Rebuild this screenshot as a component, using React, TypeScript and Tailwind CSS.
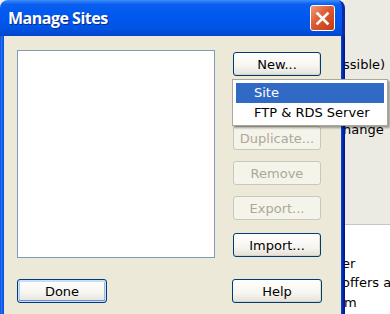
import React from "react";

const font = { fontFamily: '"DejaVu Sans", Verdana, sans-serif' };

function Btn({
  label,
  disabled,
  def,
  w = "w-[88px]",
  className = "",
}: {
  label: string;
  disabled?: boolean;
  def?: boolean;
  w?: string;
  className?: string;
}) {
  const base = `${w} h-[24px] rounded-[3px] border flex items-center justify-center text-[13px] leading-none ${className}`;
  if (disabled) {
    return (
      <div className={`${base} border-[#c9c7ba] bg-[#f5f4ea] text-[#aca899]`}>{label}</div>
    );
  }
  return (
    <div
      className={`${base} border-[#003c74] text-black bg-[linear-gradient(to_bottom,#ffffff,#f6f5f0_60%,#e4e1d6)] ${
        def
          ? "shadow-[inset_0_0_0_1px_#cde0fb,inset_0_2px_0_#c6dcfc,inset_0_-2px_0_#6b8fe6,inset_2px_0_0_#b5ccf6,inset_-2px_0_0_#9ab6f0]"
          : "shadow-[inset_0_-1px_0_#d6d0c5,inset_-1px_0_0_#e2ded2]"
      }`}
    >
      {label}
    </div>
  );
}

export default function App() {
  return (
    <div
      className="relative w-[390px] h-[314px] overflow-hidden flex bg-[#f1f0ea]"
      style={font}
    >
      {/* Dialog */}
      <div className="relative z-10 w-[345px] h-[314px] shrink-0 flex flex-col">
        {/* Title bar */}
        <div className="h-[36px] shrink-0 rounded-t-[8px] flex items-center justify-between pl-[8px] pr-[7px] bg-[linear-gradient(to_bottom,#3d8ef7,#0a5ef0_12%,#0058ee_45%,#0055e6_75%,#0046cc)] border-r-[3px] border-r-[#0a2aa8]">
          <span
            className="text-white font-bold text-[16px] tracking-[-0.5px] [text-shadow:1px_1px_0_#0a2a8c]"
            style={{ fontFamily: '"Open Sans", "DejaVu Sans", sans-serif' }}
          >
            Manage Sites
          </span>
          <div className="w-[25px] h-[26px] rounded-[3px] border border-white bg-[linear-gradient(135deg,#ef9a78,#dc5a33_45%,#c23a12)] flex items-center justify-center">
            <svg width="15" height="15" viewBox="0 0 15 15">
              <path d="M2.5 2.5 L12.5 12.5 M12.5 2.5 L2.5 12.5" stroke="white" strokeWidth="2.6" strokeLinecap="square" />
            </svg>
          </div>
        </div>
        {/* Body */}
        <div className="flex-1 flex">
          <div className="w-[4px] bg-[linear-gradient(to_right,#0a3fd8,#2a78f5,#0b5ae8,#0050e0)]" />
          <div className="flex-1 bg-[#ece9d8] pl-[13px] pt-[14px] flex flex-col">
            <div className="flex">
              <div className="w-[198px] h-[208px] bg-white border border-[#7f9db9]" />
              <div className="ml-[18px] pt-[2px] flex flex-col">
                <Btn label="New..." />
                {/* Edit button hidden beneath the open menu */}
                <div className="w-[88px] h-[24px] mt-[13px] rounded-[3px] border border-[#c9c7ba] bg-[#f5f4ea]" />
                <Btn label="Duplicate..." disabled className="mt-[13px]" />
                <Btn label="Remove" disabled className="mt-[11px]" />
                <Btn label="Export..." disabled className="mt-[11px]" />
                <Btn label="Import..." className="mt-[13px]" />
              </div>
            </div>
            <div className="mt-[21px] flex">
              <Btn label="Done" def w="w-[90px]" />
              <Btn label="Help" w="w-[90px]" className="ml-[125px]" />
            </div>
          </div>
          <div className="w-[4px] bg-[linear-gradient(to_right,#0846d8,#0328a8,#001488)]" />
        </div>
      </div>

      {/* Background window behind */}
      <div className="flex-1 flex flex-col text-[13px] text-black whitespace-nowrap">
        <div className="h-[225px] bg-[#ecebe3] border-b border-[#c8c6bc] flex flex-col">
          <div className="mt-[57px] ml-[-2px] leading-[16px]">ssible)</div>
          <div className="mt-[49px] ml-[-2px] leading-[16px]">hange</div>
        </div>
        <div className="flex-1 bg-white flex flex-col">
          <div className="mt-[31px] ml-[-3px] leading-[16px]">er</div>
          <div className="mt-[3px] ml-[-3px] leading-[16px]">offers ar</div>
          <div className="mt-[4px] ml-[-1px] leading-[16px]">m</div>
        </div>
      </div>

      {/* Dropdown menu */}
      <div className="absolute z-20 left-[232px] top-[79px] w-[156px] h-[47px] bg-white border border-[#aca899] p-[3px] shadow-[2px_2px_2px_rgba(0,0,0,0.35)] text-[13px]">
        <div className="h-[20px] bg-[#316ac5] text-white flex items-center pl-[18px]">Site</div>
        <div className="h-[20px] text-black flex items-center pl-[18px]">FTP &amp; RDS Server</div>
      </div>
    </div>
  );
}
